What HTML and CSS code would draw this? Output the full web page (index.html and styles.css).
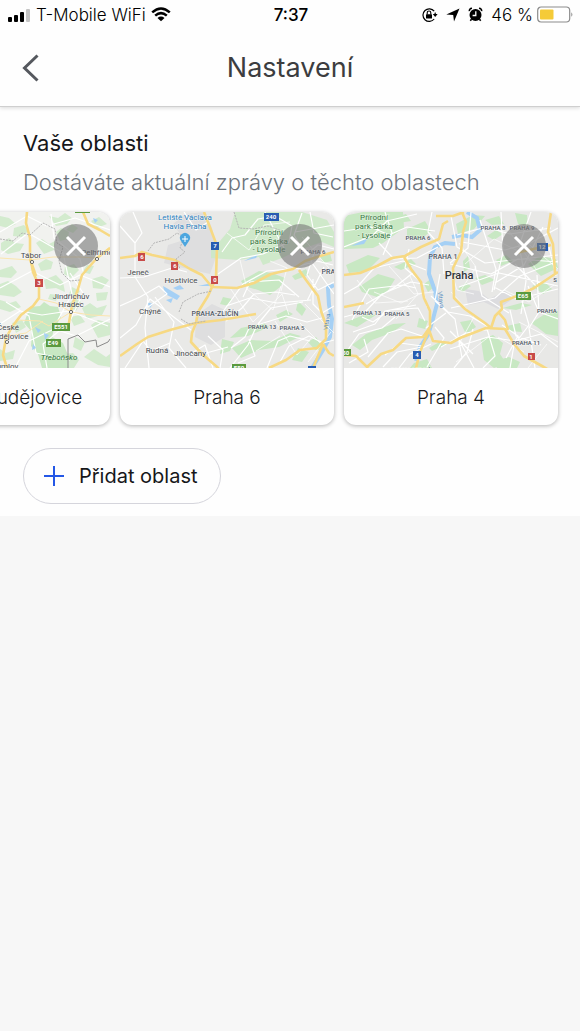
FILE: index.html
```html
<!DOCTYPE html>
<html lang="cs">
<head>
    <meta charset="UTF-8">
    <meta name="viewport" content="width=device-width, initial-scale=1.0">
    <title>Nastavení</title>
    <link rel="stylesheet" href="styles.css">
</head>
<body>
    <header class="top">
        <div class="status-bar">
            <div class="status-left">
                <svg width="23" height="14" viewBox="0 0 23 14">
                    <rect x="0" y="9" width="4" height="5" rx="1"/>
                    <rect x="6" y="7" width="4" height="7" rx="1"/>
                    <rect x="12" y="4" width="4" height="10" rx="1"/>
                    <rect x="18" y="1" width="4" height="13" rx="1" fill="#c4c4c4"/>
                </svg>
                <span>T-Mobile WiFi</span>
                <svg width="20" height="15" viewBox="0 0 20 15">
                    <path d="M1.2 5.4Q10-2.4 18.8 5.4M4.2 8.6Q10 3.6 15.8 8.6" fill="none" stroke="#000" stroke-width="2.5"/>
                    <path d="M6.5 10.9Q10 8 13.5 10.9L10 14.3z"/>
                </svg>
            </div>
            <span class="time">7:37</span>
            <div class="status-right">
                <svg width="17" height="16" viewBox="0 0 17 16">
                    <path d="M13.2 4.200A6.300 6.300 0 1 0 13.200 12M13.900 5.600Q14.300 6.300 14.300 7.500" fill="none" stroke="#000" stroke-width="1.200"/>
                    <path d="M11.800 7h4.800l-2.400 3z"/>
                    <rect x="5" y="7.200" width="6" height="4.300" rx=".6"/>
                    <path d="M6.200 7.500V5.800a1.800 1.800 0 0 1 3.600 0v1.700" fill="none" stroke="#000" stroke-width="1.100"/>
                </svg>
                <svg width="14" height="14" viewBox="0 0 14 14">
                    <path d="M13.500.5L8 13.500 7.200 7 .3 6.500z"/>
                </svg>
                <svg width="15" height="15" viewBox="0 0 15 15">
                    <circle cx="7.500" cy="8" r="6"/>
                    <path d="M1.400 4.200Q1 1.600 4 1.300M13.600 4.200Q14 1.600 11 1.300M3.500 12.300L2.300 13.800M11.500 12.300L12.700 13.800" fill="none" stroke="#000" stroke-width="1.600"/>
                    <path d="M7.800 4.200V8.500H4.600" fill="none" stroke="#fff" stroke-width="1.300"/>
                </svg>
                <span>46 %</span>
                <svg class="battery" width="37" height="17" viewBox="0 0 37 17">
                    <rect x=".7" y="1" width="32" height="15" rx="3.500" fill="#fff" stroke="#8c8c8c" stroke-width="1.200"/>
                    <rect x="3" y="3.500" width="13.500" height="10" rx="1" fill="#f5cb38"/>
                    <path d="M34.300 6.200q2.200 2.300 0 4.600z" fill="#8c8c8c"/>
                </svg>
            </div>
        </div>
        <div class="nav-bar">
            <button type="button" class="back-btn" aria-label="Zpět">
                <svg width="18" height="28" viewBox="0 0 18 28">
                    <path d="M15.500 1.500L2.500 14l13 12.500" fill="none" stroke="#55585e" stroke-width="3"/>
                </svg>
            </button>
            <h1>Nastavení</h1>
        </div>
    </header>

    <main class="areas">
        <h2>Vaše oblasti</h2>
        <p class="subtitle">Dostáváte aktuální zprávy o těchto oblastech</p>

        <div class="carousel">
            <article class="card">
                <svg class="map" viewBox="0 0 214 156">
                    <rect width="214" height="156" fill="#f1f2ef"/>
                    <g class="park">
                        <path d="M134 95l10-1 4-4 6 4 8 1 3 10-7 12-2 8 11 6 5 12v13h-26l-4-14-7-8 1-14-8-9z"/>
                        <path class="woods" d="M104 4l9 2 7 6-8 4-8-2zM118 16l10-3 5 5-7 7-9-1zM105 31l8-5 6 5 9 1-4 7-12 3-7-4zM104 58l12-4 5 6-6 6-11-1zM104 72l8-3 8 5 6 6-8 5-14-2zM140 31l6-4 7 5 6-3-1 9-10 4zM142 52l8-5 7 3-2 7-10 2zM153 4l9 2 7-5 7 5-5 6-11 2zM160 20l5-4 8 4-1 7-8 2zM148 68l12-5 7 7 2 10-9-4-10 1zM169 55l9-3 5 6-8 8-7-4zM186 60l5-7 7 1-4 8zM196 67l10-3 7 4-7 9-9-1zM154 82l8 1-2 6-8-2zM171 94l8-8 6 4-5 9zM186 96l8-5 7 5 10-3-5 10-15 4zM104 88l10 3 6-2 5 6-11 5-10-3zM104 137l6 4 9-3-2 9-13 2zM174 105l10-2 5 7-11 4zM195 113l7-5 12 3v12l-12 3zM168 142l9-1 6 7-5 8h-8zM188 145l10-8 12 8 4-3v13l-12-2zM195 9l8-4 8 7-10 4zM176 75l8 4-4 6-7-3zM200 81l12-1-2 8-9 1zM179 125l10 5-4 9-8-4zM116 111l10-3 4 7-10 6zM176 12l6 4-5 5-7-3z"/>
                    </g>
                    <g class="street">
                        <path d="M104 20l27-16 20 10 28-8 35 12M104 76l32-17 28 14 20-10 30 12M104 112l20-13 22 4 27-4 39 15M119 156l14-27 25-12 22 7 34-17M151 156l-4-24 26-21 14-30-13-20M155 2l3 24 26 21 4 16M105 42l27-21 35 20 9 41-14 26M110 90l23 14 7 37 34 7"/>
                    </g>
                    <g class="minor">
                        <path d="M104 46l30 2 23-3 27 0 17 1 13-11M143 87l17 4 15 9 20 3 19 1M121 108l23 1 9 5 14-9 8-5M111 124l19-3 17-12"/>
                    </g>
                    <g class="road">
                        <path d="M131 0l-1 11 4 15v18l3 16 6 14v12l-6 8-12 9-9 12-6 11-3 17 4 13"/>
                        <path d="M187 0l5 12 12 6 10 6M214 36l-13 10-15 17-4 14-6 17-4 22"/>
                        <path d="M134 47l6 17"/>
                    </g>
                    <g class="border">
                        <path d="M104 27l13 2 9-8 8 2 13-12 12 6 2 14 6 4-4 14 3 12 8 8 10-1"/>
                        <path class="solid" d="M172 156v-29l10-4 7 7 11-2 1 7 11-5 2-3"/>
                    </g>
                    <g class="water">
                        <path d="M139 115l6 3-3 3zM148 121l5 2-4 5zM137 132l3 4-4 2zM197 6l5 2-3 3z"/>
                    </g>
                    <g class="shield green"><rect x="179" y="-5" width="15" height="6"/><rect x="156" y="111" width="18" height="8"/><rect x="150" y="127" width="15" height="8"/><text x="165" y="117">E551</text><text x="157" y="133">E49</text></g>
                    <g class="shield red"><rect x="139" y="67" width="8" height="8"/><text x="143" y="73">3</text></g>
                    <g class="town-dot"><circle cx="136" cy="50" r="1.600"/><circle cx="175" cy="100" r="1.600"/><circle cx="111" cy="130" r="1.600"/><circle cx="201" cy="47" r="1.600"/></g>
                    <g class="town">
                        <text x="135" y="46">Tábor</text>
                        <text x="203" y="43">Pelhřimov</text>
                        <text x="175" y="87">Jindřichův</text>
                        <text x="175" y="95">Hradec</text>
                        <text x="112" y="118">České</text>
                        <text x="113" y="127">Budějovice</text>
                        <text x="96" y="157">Český Krumlov</text>
                    </g>
                    <text class="nature italic" x="163" y="148">Třeboňsko</text>
                </svg>
                <button type="button" class="remove-btn" aria-label="Odebrat České Budějovice">
                    <svg width="22" height="22" viewBox="0 0 22 22"><path d="M2 2l18 18M20 2L2 20"/></svg>
                </button>
                <p class="card-name">České Budějovice</p>
            </article>

            <article class="card">
                <svg class="map" viewBox="0 0 214 156">
                    <rect width="214" height="156" fill="#e9e9e7"/>
                    <path d="M53 12l12-10 20-2 7 16 4 29-6 17-31-7-15-4 4-18 16-5z" fill="#dededf"/>
                    <path d="M76 103l16-11 13 6v27l-14 8-16-8z" fill="#dededf"/>
                    <g class="park">
                        <path d="M91 33l9-4 10-12 5-17h67l25 8 7 12v15l-12-5-23 8-17 8-19 7-4-8-21 3-27-2z" opacity=".8"/>
                        <path d="M121 69l18-10 13 2 13 5-5 9-10 8-12-5-14-4zM172 64l14-7 3 6-14 5zM121 116l23-5 5 4-21 9-18 2zM112 136l19-8 22 1 17-8 11 3-22 11-20 3-18 8zM188 130l8-5 9 12-10 1zM102 127l12 3-4 9-10 3zM178 136l11 4-7 10-10-2zM200 45l10-4 2 8-9 2zM178 89l8 8-4 7-6-6zM103 85l9 2-4 7-8-2zM156 103l10-5 7 4-13 8z"/>
                    </g>
                    <g class="water">
                        <path d="M43 74l7 4 10 6-3 4-12-6zM53 76l7-3 4 4-7 1zM27 90l6 2-3 4zM46 88l7-2-2 5zM124 49l14-7-2 4zM78 74l14-3v3z"/>
                        <path class="river" d="M214 73l-6 3 1 17 3 14-2 18-7 13-11 18"/>
                    </g>
                    <g class="street">
                        <path d="M0 14l15 17v34l13 20-3 31 4 40M0 66l24-1 28-9 15 4M0 94l20-9 19-11 8 8-19 13M0 126l16-13 14-26 25 19 16 12M5 156l18-27 8 10 19-8M13 0l9 21-7 10M35 85l19 25-5 26 17 20M64 0l12 18 12-8M55 127l12 17 18-11 8 23M79 143l29-8M88 124l15 14-3 18"/>
                        <path d="M102 40l10-14 13-3 13-16 17-3 17 10-3 16-26 12-22 4-23 16M106 109l16-13 12-14 22-2 19 3M102 101l21-29 24-13 34-3M110 156l18-23 9-20 29-9 21 6 15-4M118 151l17-7-6-17M106 94l24-8 27 5 34-3M123 85l7-15 29-2 20 17M138 112l13-16 32-6M111 136l14-11 5-11M147 156l11-27 12-5 20 5M160 150l9-16 20-10 14 7 11-3M182 1l-8 22 12 20 12-10 16 4M190 0l4 21 19 4M195 38l-8 25 11 15 16-8M193 67v25l9 9 12-7M179 54l18-5 16 4M175 20l39-7M145 0l20 38M204 55l-17 34M190 48l24 34"/>
                    </g>
                    <g class="street thin"><path d="M107 21l22 17 15-25 26-3M110 76l23 34 29-28 7 21M120 48l7 29 26 21 8-24M155 109l22 34 15-18M136 139l24-15M185 92l29 29M180 111l34 34M188 150l23-30M182 25l27 31M150 49l17 7-6 23"/></g>
                    <g class="road">
                        <path d="M0 46l15-2 7-4 10 3 23 5 15 9 12 6 10 12 25 1 17-5 17-9 22-5 12-8 15-5 14-4"/>
                        <path d="M0 144l17-12 11-7 22-7 26-7 25-3 35-6"/>
                        <path d="M84 0l7 18 6 16-1 32-8 18-10 16-2 11-4 10-1 9 11 12 14 12 7 7"/>
                        <path d="M179 58l7 10 12 16 3 15 5 14v14l-9 9-17 2-14 10-17 8"/>
                        <path d="M203 132l-10 24M203 132l6 9 5 3"/>
                    </g>
                    <g class="border"><path d="M28 39l6-8 15-4 8-6 7 4-4 11 5 4-9 7 4 10M59 100l4-10 15-8 14-3M61 107l8 5 17-3M114 0l5 16 14 1 15-3 14 5"/></g>
                    <g class="airport">
                        <text x="65" y="8">Letiště Václava</text>
                        <text x="65" y="17">Havla Praha</text>
                        <path d="M65 35l-4-6a5 5 0 1 1 8 0z" fill="#4ca6df"/>
                        <path d="M65 24v6M62 27h6" stroke="#fff"/>
                    </g>
                    <g class="shield blue"><rect x="144" y="1" width="15" height="8"/><rect x="91" y="30" width="8" height="8"/><rect x="188" y="154" width="8" height="5"/><text x="151" y="7">240</text><text x="95" y="36">7</text></g>
                    <g class="shield red"><rect x="18" y="41" width="7" height="8"/><rect x="51" y="50" width="7" height="8"/><rect x="91" y="64" width="7" height="8"/><text x="22" y="47">6</text><text x="55" y="56">6</text><text x="95" y="70">0</text></g>
                    <g class="shield green"><rect x="112" y="152" width="14" height="8"/><text x="119" y="158">E50</text></g>
                    <g class="town">
                        <text x="18" y="63">Jeneč</text>
                        <text x="61" y="71">Hostivice</text>
                        <text x="30" y="102">Chýně</text>
                        <text x="37" y="141">Rudná</text>
                        <text x="70" y="144">Jinočany</text>
                    </g>
                    <g class="district">
                        <text class="large" x="95" y="104">PRAHA-ZLIČÍN</text>
                        <text x="142" y="117">PRAHA 13</text>
                        <text x="172" y="118">PRAHA 5</text>
                        <text x="193" y="42">PRAHA 6</text>
                        <text class="large" x="216" y="62">PRAHA 1</text>
                    </g>
                    <text class="river-name" x="0" y="0" transform="translate(209 110) rotate(-82)">Vltava</text>
                    <g class="nature">
                        <text x="149" y="23">Přírodní</text>
                        <text x="149" y="32">park Šárka</text>
                        <text x="149" y="40">- Lysolaje</text>
                    </g>
                </svg>
                <button type="button" class="remove-btn" aria-label="Odebrat Praha 6">
                    <svg width="22" height="22" viewBox="0 0 22 22"><path d="M2 2l18 18M20 2L2 20"/></svg>
                </button>
                <p class="card-name">Praha 6</p>
            </article>

            <article class="card">
                <svg class="map" viewBox="0 0 214 156">
                    <rect width="214" height="156" fill="#e8e8e6"/>
                    <path d="M121 77l14 2 10 8 16-8 9 7-16 11-14-7-16 3z" fill="#dcdcdf"/>
                    <g class="park">
                        <path d="M0 4l19-4h40l1 16-21 15-10 5-29 1zM63 17l18-8 6 10-12 10-12-5z"/>
                        <path d="M2 53l22-10 12 3-13 13-18 2zM15 75l19-13 17 5-8 13-10 5-15-5zM50 55l17-8 5 5-15 6zM0 111l22-9 10 1-19 12zM8 133l14-11 27-10 13-1-15 10-19 7-12 10zM75 106l9 3-3 8-8-2zM51 5l11-3 5 7-13 2zM80 72l8-6 3 8-7 6zM137 128l12-5 10 8-3 11 6 9-12 5-10-8zM151 149l14-4 11 5-3 6h-20zM187 111l14-9 13-3v25l-12-2-9-7zM131 66l10-3 10 5-13 5zM159 96l18-5 11 2-16 5zM114 77l8-6 5 3-8 6zM112 12l17-9 12 1-11 13-16 5zM141 8l14-4 5 8-12 1zM171 1l12 2 1 12-10-3zM184 52l12-8 16 3 2 9-17 8zM152 48l10-5 7 6-12 5zM188 74l12-5 8 8-9 5zM116 110l11-2 5 7-10 7zM163 114l13-3 2 9-13-1zM85 136l12-7 7 3-16 7zM70 151l13-4 5 9H66zM119 49l5-5 2 12-6 4zM143 24l9-6 7 4-9 6z"/>
                    </g>
                    <g class="water"><path d="M7 34l17-8-4 6z"/><path class="river" d="M111 32l-10-1-10 4-5 10-1 17 6 17 2 13-4 15-5 16-8 12-4 14M108 25l10-2 10 2 8-7-3-12-10-6"/></g>
                    <g class="street">
                        <path d="M0 35l28-11 15-15 30-7M0 105l22-6 16-17 29-12 18 3M0 82l14-8 16-18 29-7 23 9M8 108l17-31 34-4 13 3M18 105l11 5 17-12 28-2 7 13M22 92l29-17 19-15M9 120l22-8 10-13 31-6M3 139l12-17 23-6 13-11M5 151l19-11-4-13M24 145l20-24 13-4 21 7M41 143l15-12 22 3M39 155l14-15 25-5M55 156l11-14 21-10M35 31l15 16 23-1 21-11M65 37l-4 19 16 14 6 25M0 19l27-4 18 8 18-8 28 4M41 0l7 21-9 22M88 0l-4 20 14 16 2 26M96 62l-5 27 20 18 7 39M87 84l17 16 22 4 20 12M82 116l20-15M83 155l17-29-9-11M97 135l25-14 24-4M106 119l23 23M107 4l6 31 28 16 73-8M113 23l29-8 24 7 41-6M127 0l-3 36-18 15M136 8l16 49-4 23M157 0l2 40-9 38M187 0l-12 34 7 35-5 33M199 15l-19 38-29 18M214 16l-28 15-25 7-43-8M106 52l41 10 27-15 40 3M115 75l40-14 59 13M107 96l44-10 25-22 38-15M131 54l7 30 27 17M150 75l23 12 41-10M106 137l38-12 27 4 26-7 17 13M114 126l16 30M129 117l-6 23-13 16M143 117l8 27-12 12M158 113l16 11-12 22M166 98l6 26 25 9M178 89l7 24-15 20-4 23M184 74l11 26 19 7M193 63l2 37-10 16 6 40M205 35l7 29M171 52l21 22"/>
                    </g>
                    <g class="street thin"><path d="M30 80l27 11 21-10M45 54l25 28 20-2M52 107l22-25-8-18M13 68l18 23 33-2M107 58l6 20 17 4M115 31l17 24-15 23M121 52l29-25 24 12M162 15l30 42M180 28l34 29M160 78l25 12 25-17M107 80l23 25-16 29M112 150l34-26M154 125l26 15M175 110l39 20M203 132l-19 24"/></g>
                    <g class="road">
                        <path d="M0 63l16-2 17-7 15-8 13-2 16-9 18-8 4-15 5-3"/>
                        <path d="M60 45l7 12 10 13 3 16 6 13v16l-7 10-17 1-13 12-12 4-14 13"/>
                        <path d="M85 118l-9 22-4 16M85 118l4 11 18 2 9-5 26-10 19 1 9 15 10 12 18 10 12 7"/>
                        <path d="M0 143l12 1 12 12M0 95l20-4M92 4h17l11-4M118 0l4 10-3 10-2 20-8 16 1 30 11 11 20 14 6 5"/>
                        <path d="M147 116l4-12 7-7-1-7 21-8 12-6 24-16M155 101l6 7 3 10M207 0l-3 20 5 12 2 29"/>
                        <path d="M172 41l35-8"/>
                    </g>
                    <g class="district">
                        <text x="74" y="28">PRAHA 6</text>
                        <text x="149" y="18">PRAHA 8</text>
                        <text x="178" y="18">PRAHA 9</text>
                        <text class="large" x="99" y="47">PRAHA 1</text>
                        <text x="23" y="103">PRAHA 13</text>
                        <text x="53" y="104">PRAHA 5</text>
                        <text x="207" y="101">PRAHA 10</text>
                        <text x="182" y="133">PRAHA 11</text>
                        <text x="67" y="160">PRAHA-VELKÁ</text>
                        <text x="211" y="70">S</text>
                    </g>
                    <text class="river-name" x="0" y="0" transform="translate(95 88) rotate(82)">Vltava</text>
                    <text class="city" x="115" y="67">Praha</text>
                    <g class="nature">
                        <text x="30" y="8">Přírodní</text>
                        <text x="30" y="17">park Šárka</text>
                        <text x="30" y="26">- Lysolaje</text>
                    </g>
                    <g class="shield green"><rect x="172" y="80" width="15" height="8"/><rect x="-8" y="137" width="15" height="7"/><text x="179" y="86">E65</text><text x="0" y="143">E50</text></g>
                    <g class="shield blue"><rect x="193" y="31" width="11" height="8"/><rect x="69" y="139" width="8" height="8"/><text x="198" y="37">12</text><text x="73" y="145">4</text></g>
                    <g class="shield red"><rect x="184" y="141" width="7" height="7"/><text x="187" y="147">1</text></g>
                </svg>
                <button type="button" class="remove-btn" aria-label="Odebrat Praha 4">
                    <svg width="22" height="22" viewBox="0 0 22 22"><path d="M2 2l18 18M20 2L2 20"/></svg>
                </button>
                <p class="card-name">Praha 4</p>
            </article>
        </div>

        <button type="button" class="add-btn">
            <svg width="20" height="20" viewBox="0 0 20 20"><path d="M10 0v20M0 10h20" stroke="#2457e6" stroke-width="2"/></svg>
            Přidat oblast
        </button>
    </main>
</body>
</html>
```

FILE: styles.css
```css
* {
    box-sizing: border-box;
}
body {
    margin: 0;
    font-family: Inter, "Liberation Sans", sans-serif;
    color: #16171a;
    background-color: #f7f7f7;
}
h1, h2, p {
    margin: 0;
    font-weight: 400;
}
button {
    border: none;
    padding: 0;
    font-family: inherit;
    color: inherit;
    cursor: pointer;
}
svg {
    display: block;
    flex: none;
}

/* header */
.top {
    position: relative;
    background-color: #fefefe;
    border-bottom: 1px solid #cfcfcf;
    box-shadow: 0 1px 4px rgba(0, 0, 0, 0.15);
}
.status-bar {
    display: grid;
    grid-template-columns: 1fr auto 1fr;
    align-items: center;
    height: 29px;
    padding: 0 6px 0 8px;
    font-size: 17px;
    color: #000;
}
.status-left, .status-right {
    display: flex;
    align-items: center;
    gap: 5px;
    font-weight: 300;
}
.status-right {
    justify-content: flex-end;
    gap: 8px;
}
.status-right .battery {
    margin-left: -4px;
}
.time {
    font-weight: 500;
}
.nav-bar {
    display: grid;
    grid-template-columns: 40px 1fr 40px;
    align-items: center;
    height: 77px;
    padding: 0 22px;
}
.back-btn {
    justify-self: start;
    background: none;
}
h1 {
    font-size: 27px;
    line-height: 32px;
    text-align: center;
    color: #3c3d40;
}

/* areas */
.areas {
    padding: 22px 23px 12px;
    background-color: #fefefe;
}
h2 {
    font-size: 22px;
    line-height: 28px;
}
.subtitle {
    margin-top: 11px;
    font-size: 22px;
    line-height: 28px;
    font-weight: 300;
    color: #6c737b;
}
.carousel {
    display: flex;
    justify-content: flex-end;
    gap: 10px;
    margin: 0 -23px;
    padding: 16px 22px 23px;
    overflow: hidden;
}
.card {
    position: relative;
    flex: none;
    width: 214px;
    background-color: #fff;
    border-radius: 12px;
    box-shadow: 0 1px 4px rgba(0, 0, 0, 0.3);
    overflow: hidden;
}
.card-name {
    padding: 16px 0 13px;
    font-size: 19px;
    line-height: 28px;
    font-weight: 300;
    text-align: center;
}
.remove-btn {
    position: absolute;
    top: 12px;
    right: 12px;
    display: flex;
    align-items: center;
    justify-content: center;
    width: 44px;
    height: 44px;
    border-radius: 50%;
    background-color: rgba(118, 118, 118, 0.6);
}
.remove-btn path {
    stroke: #fff;
    stroke-width: 3;
}
.add-btn {
    display: flex;
    align-items: center;
    gap: 15px;
    height: 56px;
    padding: 0 22px 0 20px;
    border: 1px solid #d5d5dc;
    border-radius: 28px;
    background-color: #fefefe;
    font-size: 20px;
}

/* maps */
.map {
    width: 100%;
    font-family: Roboto, sans-serif;
    font-size: 7px;
    text-anchor: middle;
}
.park {
    fill: #c8e8c3;
}
.woods {
    opacity: 0.75;
}
.water {
    fill: #a5d0f5;
}
.river {
    fill: none;
    stroke: #a5d0f5;
    stroke-width: 4;
}
.street, .minor, .road, .border {
    fill: none;
    stroke-linejoin: round;
}
.street {
    stroke: #fff;
    stroke-width: 1.2;
}
.thin {
    stroke-width: 1;
    opacity: 0.7;
}
.minor {
    stroke: #fbe5ae;
    stroke-width: 1;
}
.road {
    stroke: #f7d983;
    stroke-width: 2.6;
}
.border {
    stroke: #b4b4b4;
    stroke-width: 1;
    stroke-dasharray: 2 1;
}
.solid {
    stroke: #8a8a8a;
    stroke-dasharray: none;
}
.town {
    font-size: 8px;
    fill: #44484d;
}
.town-dot {
    fill: #fff;
    stroke: #666;
}
.district {
    font-size: 6px;
    font-weight: 500;
    fill: #4f5765;
}
.large {
    font-size: 7px;
}
.city {
    font-size: 11px;
    font-weight: 500;
    fill: #303338;
}
.nature {
    font-size: 8px;
    fill: #347540;
}
.italic {
    font-style: italic;
}
.airport {
    font-size: 8px;
    fill: #2b82c0;
}
.river-name {
    font-size: 6px;
    fill: #4b86bd;
}
.town text, .district text, .nature text, .airport text, .city {
    stroke: #fff;
    stroke-width: 1;
    stroke-opacity: 0.5;
    paint-order: stroke;
}
.shield text {
    font-size: 6px;
    font-weight: 700;
    fill: #fff;
}
.red {
    fill: #c84b49;
}
.blue {
    fill: #285db1;
}
.green {
    fill: #5b9a3e;
}
```
